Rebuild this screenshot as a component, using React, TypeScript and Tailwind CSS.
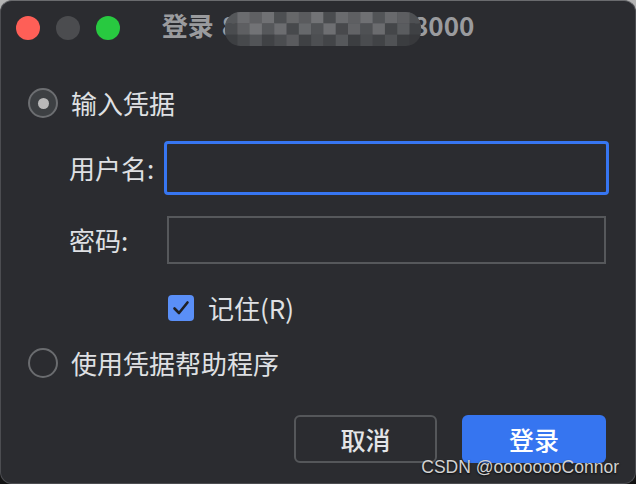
import React from "react";

const FONT = '"Noto Sans CJK SC", "Noto Sans", sans-serif';

const mosaic: string[][] = [
  ["#55575a", "#6b6c6f", "#5f6063", "#707174", "#4d4f52", "#666769", "#5a5b5e", "#727376", "#4a4c4f", "#6a6b6e", "#5e5f62", "#6f7073", "#525457", "#68696c", "#5d5e61", "#4e5053"],
  ["#4a4c4f", "#5e5f62", "#727376", "#56585b", "#6c6d70", "#47494c", "#66686b", "#515356", "#6e6f72", "#48494c", "#626366", "#4f5154", "#6b6c6f", "#444649", "#5a5c5f", "#3f4144"],
  ["#3d3f42", "#47494c", "#525457", "#404245", "#4b4d50", "#5a5b5e", "#3f4144", "#4d4f52", "#434548", "#56585b", "#3c3e41", "#4a4c4f", "#414346", "#505255", "#3b3d40", "#38393c"],
];

function Mosaic() {
  const cw = 12.3;
  const ch = 11.3;
  return (
    <svg width="196" height="34" viewBox="0 0 196 34" className="relative z-10 -ml-[12px] -mr-[8px] mt-[6px]">
      <defs>
        <clipPath id="mz">
          <rect x="0" y="0" width="196" height="34" rx="15" ry="15" />
        </clipPath>
      </defs>
      <g clipPath="url(#mz)">
        {mosaic.map((row, r) =>
          row.map((c, i) => (
            <rect key={`${r}-${i}`} x={i * cw} y={r * ch} width={cw + 0.5} height={ch + 0.5} fill={c} />
          ))
        )}
      </g>
    </svg>
  );
}

export default function App() {
  return (
    <div className="w-[636px] h-[484px] bg-linear-to-b from-[#b4b4b4] to-[#121212]" style={{ fontFamily: FONT }}>
      <div className="relative w-full h-full rounded-[12px] bg-[#2b2c30] border border-[#4c4d51] border-t-[#6a6b6e] overflow-hidden flex flex-col">
        {/* Title bar */}
        <div className="grid grid-cols-[1fr_auto_1fr] h-[56px]">
          <div className="flex items-start gap-[16px] pl-[15px] pt-[15px]">
            <div className="w-[24px] h-[24px] rounded-full bg-[#fe5f57]" />
            <div className="w-[24px] h-[24px] rounded-full bg-[#4b4c4f]" />
            <div className="w-[24px] h-[24px] rounded-full bg-[#28c940]" />
          </div>
          <div className="flex items-start pt-[5px] text-[26px] font-bold text-[#9a9b9e] leading-[38px]">
            <span>登录</span>
            <span className="ml-[8px]">8</span>
            <Mosaic />
            <span>8000</span>
          </div>
          <div />
        </div>

        {/* Content */}
        <div className="flex flex-col pl-[27px] pr-[26px] text-[26px] text-[#dfe0e3]">
          {/* radio 1 */}
          <div className="mt-[31px] flex items-center h-[30px]">
            <div className="w-[30px] h-[30px] rounded-full border-2 border-[#6c6e71] bg-[#3d4043] flex items-center justify-center">
              <div className="w-[11px] h-[11px] rounded-full bg-[#b9b9b9]" />
            </div>
            <span className="ml-[13px] leading-none">输入凭据</span>
          </div>

          {/* form */}
          <div className="grid grid-cols-[136px_1fr] items-center mt-[23px]">
            <span className="pl-[41px] leading-none">用户名:</span>
            <div className="h-[54px] rounded-[4px] border-[3px] border-[#3776f1]" />
          </div>
          <div className="grid grid-cols-[136px_1fr] items-center mt-[21px]">
            <span className="pl-[41px] leading-none">密码:</span>
            <div className="h-[48px] mx-[3px] border-2 border-[#56585b]" />
          </div>

          {/* remember */}
          <div className="flex items-center mt-[31px] pl-[140px] h-[26px]">
            <div className="w-[26px] h-[26px] rounded-[4px] bg-[#5a8ff7] flex items-center justify-center">
              <svg width="20" height="20" viewBox="0 0 20 20">
                <polyline points="3.5,10.5 8,15 16.5,4.5" fill="none" stroke="#1f2024" strokeWidth="2.6" strokeLinecap="round" strokeLinejoin="round" />
              </svg>
            </div>
            <span className="ml-[14px] leading-none">记住(R)</span>
          </div>

          {/* radio 2 */}
          <div className="mt-[27px] flex items-center h-[30px]">
            <div className="w-[30px] h-[30px] rounded-full border-2 border-[#6a6c6f]" />
            <span className="ml-[13px] leading-none">使用凭据帮助程序</span>
          </div>

          {/* buttons */}
          <div className="mt-[37px] flex justify-end gap-[25px] pr-[3px]">
            <button className="w-[143px] h-[48px] rounded-[6px] border-2 border-[#55575a] text-[25px] font-medium text-[#e4e5e7] leading-none">
              取消
            </button>
            <button className="w-[144px] h-[48px] rounded-[6px] bg-[#3675f0] text-[25px] font-medium text-white leading-none">
              登录
            </button>
          </div>
        </div>

        <div
          className="absolute right-[16px] bottom-[7px] text-[17.5px] leading-none text-[#d2d2d2] [text-shadow:0_1px_2px_rgba(0,0,0,0.8)]"
          style={{ fontFamily: '"Liberation Sans", Arial, sans-serif' }}
        >
          CSDN @oooooooConnor
        </div>
      </div>
    </div>
  );
}
